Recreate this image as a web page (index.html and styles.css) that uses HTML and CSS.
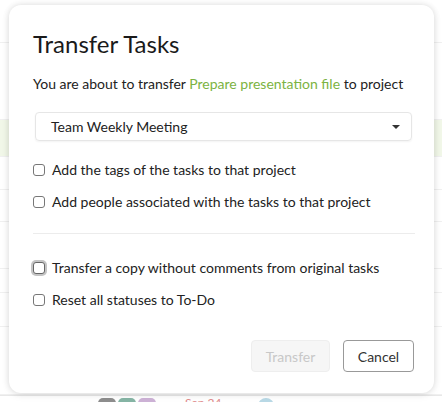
FILE: index.html
```html
<!DOCTYPE html>
<html>
<head>
<meta charset="utf-8">
<link rel="stylesheet" href="styles.css">
</head>
<body>
<div class="page">
  <div class="row r1"></div>
  <div class="row r2"></div>
  <div class="row r3 green"></div>
  <div class="row r4"></div>
  <div class="row r5"></div>
  <div class="row r6"></div>
  <div class="row r7"></div>
  <div class="row r8"></div>
  <div class="row r9"></div>
  <div class="bottom-row">
    <span class="av av1"></span><span class="av av2"></span><span class="av av3"></span>
    <span class="date">Sep 24</span>
    <span class="dot"></span>
  </div>
</div>
<div class="modal">
  <h1 class="title">Transfer Tasks</h1>
  <p class="intro">You are about to transfer <span class="link">Prepare presentation file</span> to project</p>
  <div class="select">
    <span>Team Weekly Meeting</span>
    <span class="caret"></span>
  </div>
  <div class="opts">
    <label class="opt"><span class="cb"></span>Add the tags of the tasks to that project</label>
    <label class="opt"><span class="cb"></span>Add people associated with the tasks to that project</label>
  </div>
  <hr class="divider">
  <div class="opts opts2">
    <label class="opt"><span class="cb focus"></span>Transfer a copy without comments from original tasks</label>
    <label class="opt"><span class="cb"></span>Reset all statuses to To-Do</label>
  </div>
  <div class="actions">
    <button class="btn disabled">Transfer</button>
    <button class="btn cancel">Cancel</button>
  </div>
</div>
</body>
</html>
```
FILE: styles.css
```css
* { box-sizing: border-box; }
html, body { margin: 0; padding: 0; }
body {
  width: 442px;
  height: 402px;
  overflow: hidden;
  background: #fff;
  font-family: Lato, "Open Sans", sans-serif;
  color: #222;
  position: relative;
}
.page { display: flex; flex-direction: column; }
.row { border-bottom: 1px solid #f0f0f0; }
.r1 { height: 43px; }
.r2 { height: 77px; }
.r3 { height: 37px; }
.green { background: #f1f7e8; }
.r4 { height: 33px; }
.r5 { height: 32px; }
.r6 { height: 47px; }
.r7 { height: 24px; }
.r8 { height: 34px; }
.r9 { height: 68px; }
.bottom-row {
  height: 20px;
  display: flex;
  align-items: flex-start;
  padding-left: 98px;
  padding-top: 2px;
  border-top: 1px solid #e8e8e8;
}
.av { width: 18px; height: 18px; border-radius: 5px; margin-right: 2px; }
.av1 { background: #8e8e8e; }
.av2 { background: #86b5a5; }
.av3 { background: #cdb2d6; }
.date { color: #e08a8a; font-size: 12px; margin-left: 27px; line-height: 10px; }
.dot { width: 16px; height: 16px; border-radius: 50%; background: #b9d9e6; margin-left: 36px; }

.modal {
  position: absolute;
  left: 9px;
  top: 5px;
  width: 425px;
  height: 388px;
  background: #fff;
  border-radius: 12px;
  box-shadow: 0 0 6px rgba(0,0,0,0.12), 0 2px 10px rgba(0,0,0,0.06);
  padding: 24px 20px 0 24px;
  display: flex;
  flex-direction: column;
}
.title {
  margin: 0;
  font-size: 24px;
  font-weight: 400;
  line-height: 30px;
  color: #1a1a1a;
}
.intro {
  margin: 16px 0 0;
  font-size: 14px;
  line-height: 18px;
  color: #222;
}
.link { color: #7cb342; }
.select {
  margin: 19px 0 0 2px;
  height: 29px;
  width: 377px;
  border: 1px solid #e6e6e6;
  border-radius: 4px;
  box-shadow: 0 1px 2px rgba(0,0,0,0.05);
  display: flex;
  align-items: center;
  justify-content: space-between;
  padding: 0 11px 0 15px;
  font-size: 14px;
  color: #222;
}
.caret {
  width: 0; height: 0;
  border-left: 4px solid transparent;
  border-right: 4px solid transparent;
  border-top: 4px solid #333;
}
.opts { display: flex; flex-direction: column; gap: 14px; margin-top: 20px; }
.opts2 { margin-top: 25px; }
.opt {
  display: flex;
  align-items: center;
  font-size: 14px;
  line-height: 18px;
  color: #222;
}
.cb {
  width: 12px; height: 12px;
  border: 1px solid #777;
  border-radius: 3px;
  margin-right: 7px;
  background: #fff;
  flex: none;
}
.cb.focus {
  border: 1.5px solid #666;
  box-shadow: 0 0 0 2px #c4c4c4;
}
.divider {
  border: 0;
  border-top: 1px solid #ececec;
  margin: 22px 0 0;
  width: 382px;
}
.actions {
  display: flex;
  justify-content: flex-end;
  gap: 13px;
  margin-top: 31px;
}
.btn {
  height: 32px;
  border-radius: 4px;
  font-family: Lato, "Open Sans", sans-serif;
  font-size: 14px;
  padding: 0;
}
.disabled {
  width: 79px;
  background: #f6f6f6;
  border: 1px solid #eee;
  color: #c8c8c8;
}
.cancel {
  width: 71px;
  background: #fff;
  border: 1px solid #999;
  color: #333;
}
```
